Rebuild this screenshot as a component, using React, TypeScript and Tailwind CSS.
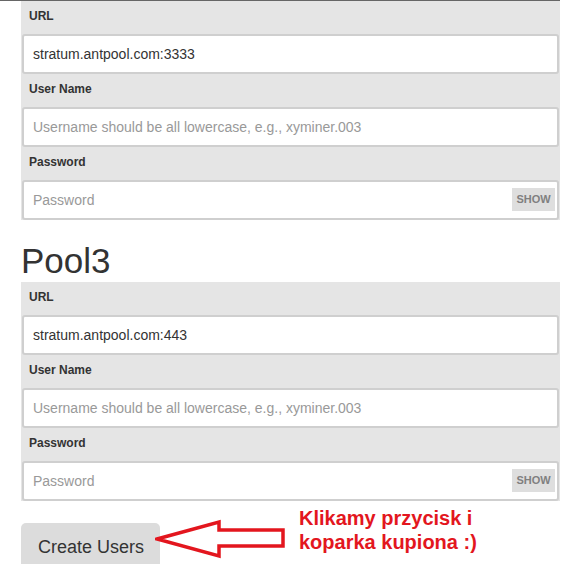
import React from 'react'

const font = { fontFamily: '"Liberation Sans", Arial, sans-serif' }

function Field({ label, value, placeholder, password }: { label: string; value?: string; placeholder?: string; password?: boolean }) {
  return (
    <>
      <div className="h-[33px] px-[8px] pt-[7px] text-[12px] leading-[17px] font-bold text-[#333]">{label}</div>
      <div className="relative mx-[1px]">
        <input
          type={password ? 'password' : 'text'}
          defaultValue={value}
          placeholder={placeholder}
          readOnly
          className="block h-[40px] w-full rounded-[3px] border-2 border-[#cfcfcf] bg-white pl-[9px] text-[14px] text-[#333] placeholder:text-[#999] outline-none"
          style={font}
        />
        {password && (
          <span className="absolute right-[4px] top-[8px] flex h-[23px] w-[43px] items-center justify-center bg-[#dedede] text-[11px] font-bold text-[#808080]">
            SHOW
          </span>
        )}
      </div>
    </>
  )
}

function Pool({ url }: { url: string }) {
  return (
    <div className="w-[539px] bg-[#e5e5e5]">
      <Field label="URL" value={url} />
      <Field label="User Name" placeholder="Username should be all lowercase, e.g., xyminer.003" />
      <Field label="Password" placeholder="Password" password />
    </div>
  )
}

export default function App() {
  return (
    <div className="h-[564px] w-[569px] overflow-hidden bg-white" style={font}>
      <div className="h-px w-[560px] bg-[#666]" />
      <div className="pl-[21px]">
        <Pool url="stratum.antpool.com:3333" />

        <h1 className="mt-[21px] mb-[1px] h-[40px] text-[35px] leading-[40px] font-normal text-[#333]">Pool3</h1>
        <Pool url="stratum.antpool.com:443" />

        <div className="mt-[5px] flex items-start">
          <button className="mt-[17px] h-[50px] w-[139px] shrink-0 rounded-[5px] bg-[#dcdcdc] pb-[2px] text-left pl-[17px] text-[18px] text-[#333]">
            Create Users
          </button>
          <svg width="130" height="40" viewBox="0 0 130 40" className="mt-[13px] -ml-[5px] shrink-0" fill="none">
            <polygon
              points="2,20 64,3 64,11 128,11 128,27 64,27 64,37"
              stroke="#e3161e"
              strokeWidth="3.5"
              strokeLinejoin="miter"
            />
          </svg>
          <div className="ml-[14px] text-[20px] leading-[24px] font-bold text-[#e3161e]">
            <div>Klikamy przycisk i</div>
            <div>koparka kupiona :)</div>
          </div>
        </div>
      </div>
    </div>
  )
}
